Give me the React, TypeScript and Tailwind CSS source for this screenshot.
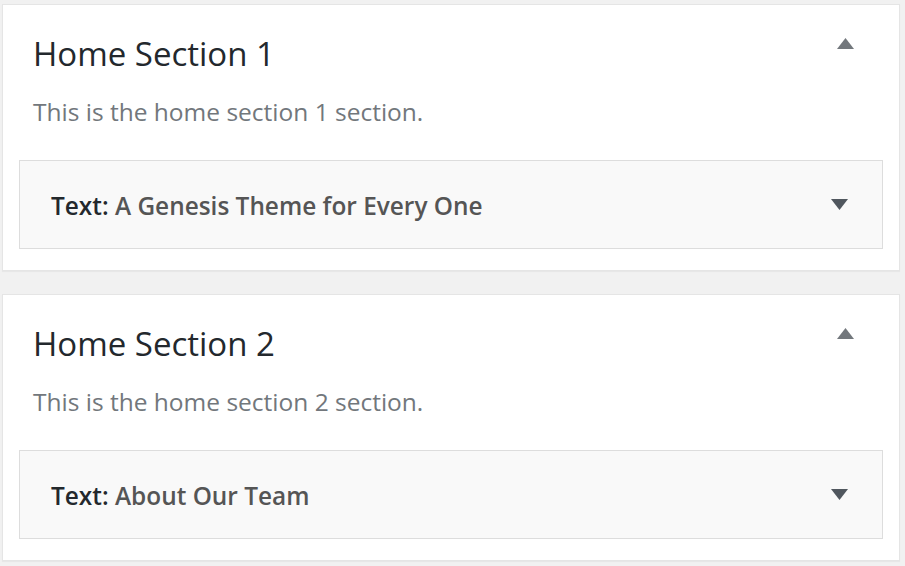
import React from 'react'

type Section = {
  title: string
  description: string
  widget: string
}

const sections: Section[] = [
  { title: 'Home Section 1', description: 'This is the home section 1 section.', widget: 'A Genesis Theme for Every One' },
  { title: 'Home Section 2', description: 'This is the home section 2 section.', widget: 'About Our Team' },
]

function Caret({ up, className }: { up?: boolean; className: string }) {
  return (
    <svg width="17" height="11" viewBox="0 0 17 11" className={className}>
      {up ? <path d="M8.5 0 L17 11 L0 11 Z" fill="currentColor" /> : <path d="M0 0 L17 0 L8.5 11 Z" fill="currentColor" />}
    </svg>
  )
}

function SectionCard({ s }: { s: Section }) {
  return (
    <div className="h-[267px] shrink-0 border border-[#e5e5e5] bg-white shadow-[0_1px_1px_rgba(0,0,0,0.04)]">
      <div className="flex items-start justify-between pl-[30px] pr-[45px]">
        <h3 className="pt-[27px] text-[33px] leading-[44px] font-medium text-[#23282d]">{s.title}</h3>
        <Caret up className="mt-[33px] text-[#72777c]" />
      </div>
      <p className="mt-[20px] pl-[30px] text-[24.5px] leading-[32px] text-[#72777c]">{s.description}</p>
      <div className="mx-4 mt-[32px] flex h-[89px] items-center justify-between border border-[#dddddd] bg-[#f9f9f9] pl-[31px] pr-[34px]">
        <span className="mt-[3px] text-[24.4px] leading-[32px] font-semibold text-[#555555]">
          <span className="text-[#23282d]">Text:</span> {s.widget}
        </span>
        <Caret className="text-[#50575e]" />
      </div>
    </div>
  )
}

export default function App() {
  return (
    <div className="flex h-[566px] flex-col gap-[23px] overflow-hidden bg-[#f1f1f1] pt-[4px] pl-[2px] pr-[5px]" style={{ fontFamily: '"Open Sans", "Noto Sans", sans-serif' }}>
      {sections.map((s) => (
        <SectionCard key={s.title} s={s} />
      ))}
    </div>
  )
}
